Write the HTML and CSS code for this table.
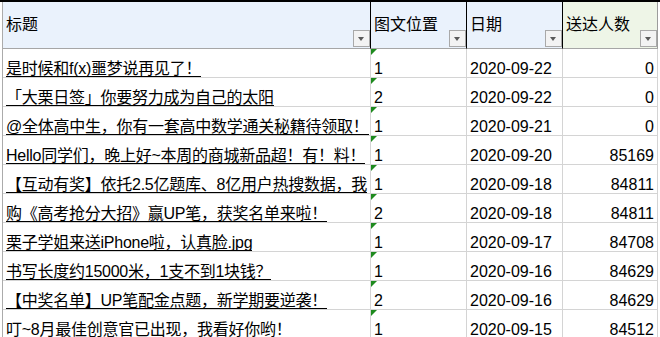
FILE: index.html
```html
<!DOCTYPE html>
<html lang="zh-CN">
<head>
<meta charset="utf-8">
<title>送达统计</title>
<link rel="stylesheet" href="styles.css">
</head>
<body>
<div class="sheet">
  <div class="grid">
    <div class="hc"><span class="ht">标题</span><span class="dd"></span></div>
    <div class="hc"><span class="ht">图文位置</span><span class="dd"></span></div>
    <div class="hc"><span class="ht">日期</span><span class="dd"></span></div>
    <div class="hc hc-last"><span class="ht">送达人数</span><span class="dd"></span></div>

    <div class="c"><span class="t u">是时候和f(x)噩梦说再见了！</span></div>
    <div class="c c2"><span class="t">1</span></div>
    <div class="c"><span class="t">2020-09-22</span></div>
    <div class="c num"><span class="t">0</span></div>

    <div class="c"><span class="t u">「大栗日签」你要努力成为自己的太阳</span></div>
    <div class="c c2"><span class="t">2</span></div>
    <div class="c"><span class="t">2020-09-22</span></div>
    <div class="c num"><span class="t">0</span></div>

    <div class="c"><span class="t u">@全体高中生，你有一套高中数学通关秘籍待领取！</span></div>
    <div class="c c2"><span class="t">1</span></div>
    <div class="c"><span class="t">2020-09-21</span></div>
    <div class="c num"><span class="t">0</span></div>

    <div class="c"><span class="t u">Hello同学们，晚上好~本周的商城新品超！有！料！</span></div>
    <div class="c c2"><span class="t">1</span></div>
    <div class="c"><span class="t">2020-09-20</span></div>
    <div class="c num"><span class="t">85169</span></div>

    <div class="c"><span class="t u">【互动有奖】依托2.5亿题库、8亿用户热搜数据，我</span></div>
    <div class="c c2"><span class="t">1</span></div>
    <div class="c"><span class="t">2020-09-18</span></div>
    <div class="c num"><span class="t">84811</span></div>

    <div class="c"><span class="t u">购《高考抢分大招》赢UP笔，获奖名单来啦！</span></div>
    <div class="c c2"><span class="t">2</span></div>
    <div class="c"><span class="t">2020-09-18</span></div>
    <div class="c num"><span class="t">84811</span></div>

    <div class="c"><span class="t u">栗子学姐来送iPhone啦，认真脸.jpg</span></div>
    <div class="c c2"><span class="t">1</span></div>
    <div class="c"><span class="t">2020-09-17</span></div>
    <div class="c num"><span class="t">84708</span></div>

    <div class="c"><span class="t u">书写长度约15000米，1支不到1块钱？</span></div>
    <div class="c c2"><span class="t">1</span></div>
    <div class="c"><span class="t">2020-09-16</span></div>
    <div class="c num"><span class="t">84629</span></div>

    <div class="c"><span class="t u">【中奖名单】UP笔配金点题，新学期要逆袭！</span></div>
    <div class="c c2"><span class="t">2</span></div>
    <div class="c"><span class="t">2020-09-16</span></div>
    <div class="c num"><span class="t">84629</span></div>

    <div class="c"><span class="t u">叮~8月最佳创意官已出现，我看好你哟！</span></div>
    <div class="c c2"><span class="t">1</span></div>
    <div class="c"><span class="t">2020-09-15</span></div>
    <div class="c num"><span class="t">84512</span></div>
  </div>
</div>
</body>
</html>
```
FILE: styles.css
```css
html, body {
  margin: 0;
  padding: 0;
  background: #ffffff;
  overflow: hidden;
}

body {
  font-family: "Liberation Sans", "Noto Sans CJK SC", sans-serif;
  font-size: 16px;
  color: #000000;
}

.sheet {
  width: 660px;
  border-top: 2px solid #000000;
}

.grid {
  margin-left: 2px;
  border-left: 1px solid #ababab;
  display: grid;
  grid-template-columns: 368px 96px 96px 95px;
  grid-template-rows: 47px;
  grid-auto-rows: 29px;
  width: 655px;
}

.hc {
  position: relative;
  box-sizing: border-box;
  display: flex;
  align-items: center;
  padding: 0 3px;
  background: #eaf2fc;
  border-right: 1px solid #000000;
  border-bottom: 1px solid #a6a6a6;
}

.hc-last {
  background: #eef5e7;
  border-right-color: #9c9c9c;
}

.ht {
  line-height: 20px;
  white-space: nowrap;
}

.dd {
  position: absolute;
  right: 0;
  bottom: 1px;
  width: 17px;
  height: 17px;
  box-sizing: border-box;
  border: 1px solid #a9a9a9;
  background: #f3f3f3;
}

.dd::after {
  content: "";
  position: absolute;
  left: 4px;
  top: 6px;
  border-left: 3.5px solid transparent;
  border-right: 3.5px solid transparent;
  border-top: 4px solid #5a5a5a;
}

.c {
  position: relative;
  box-sizing: border-box;
  display: flex;
  align-items: flex-end;
  padding: 0 3px;
  overflow: hidden;
  white-space: nowrap;
  border-right: 1px solid #d4d4d4;
  border-bottom: 1px solid #d4d4d4;
}

.t {
  display: inline-block;
  line-height: 15px;
  border-bottom: 1px solid transparent;
}

.u {
  border-bottom-color: #000000;
  letter-spacing: -0.25px;
}

.num {
  justify-content: flex-end;
}

.c2::before {
  content: "";
  position: absolute;
  left: 0;
  top: 0;
  border-top: 6px solid #1e8a1e;
  border-right: 6px solid transparent;
}
```
